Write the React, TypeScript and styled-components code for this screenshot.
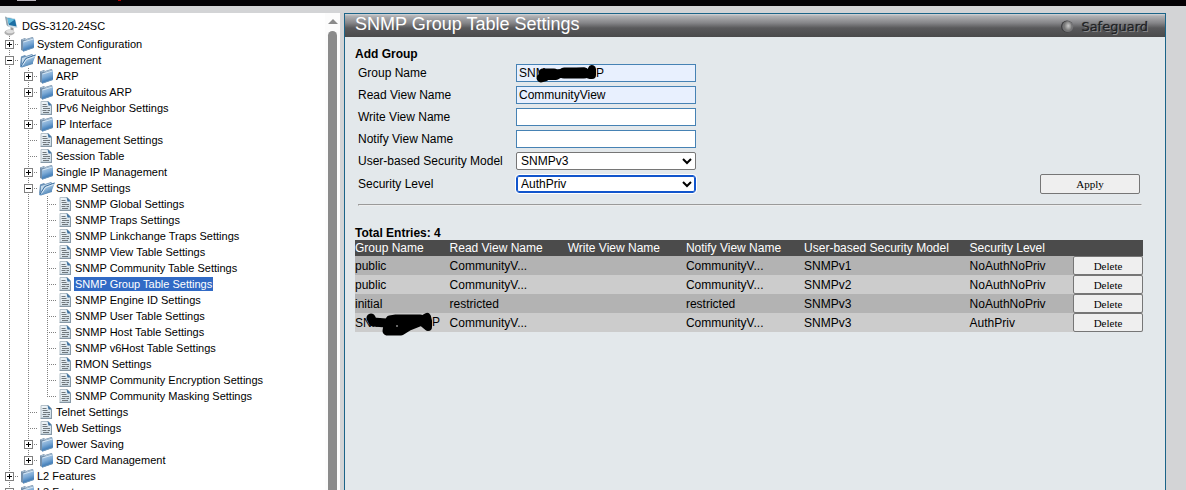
import React from "react";
import styled, { createGlobalStyle, css } from "styled-components";

const Global = createGlobalStyle`
  * { box-sizing: border-box; }
  body { margin: 0; background: #d3d4d6; color: #000; font: 12px "Liberation Sans", Arial, sans-serif; }
`;

const Page = styled.div`
  height: 100vh;
  display: flex;
  flex-direction: column;
  overflow: hidden;
`;

const TopStrip = styled.header`
  flex: none;
  height: 6px;
  margin-bottom: 7px;
  background: #030104;
  display: flex;
`;
const StripLabel = styled.span`
  width: 19px;
  height: 1px;
  margin-left: 17px;
  background: #b9b4bd;
`;
const StripMark = styled.span`
  width: 3px;
  height: 1px;
  margin-left: 82px;
  background: #b00000;
`;

const Body = styled.div`
  flex: 1;
  min-height: 0;
  display: flex;
`;

const Sidebar = styled.nav`
  flex: none;
  width: 340px;
  display: flex;
  background: #fff;
  overflow: hidden;
  margin-right: 4px;
`;
const Tree = styled.div`
  flex: 1;
  font-size: 11px;
  line-height: 16px;
  overflow: hidden;
`;
const RootRow = styled.div`
  display: flex;
  height: 23px;
  padding: 2px 0 0 4px;
  align-items: center;
  gap: 3px;
`;
const TreeRow = styled.div`
  display: flex;
  height: 16px;
  white-space: nowrap;
`;
const vDots = "repeating-linear-gradient(to bottom, #808080 0 1px, transparent 1px 2px)";
const hDots = "repeating-linear-gradient(to right, #808080 0 1px, transparent 1px 2px)";
const Guide = styled.span<{ $half?: boolean; $branch?: boolean }>`
  flex: none;
  width: 19px;
  height: 16px;
  padding: 4px 0 0 5px;
  background-image: ${vDots}${(p) => (p.$branch ? `, ${hDots}` : "")};
  background-repeat: no-repeat;
  background-position: 9px 0, 9px 8px;
  background-size: 1px ${(p) => (p.$half ? "9px" : "16px")}, 10px 1px;
`;
const Toggle = styled.button<{ $open?: boolean }>`
  display: block;
  width: 9px;
  height: 9px;
  padding: 0;
  border: 1px solid #808080;
  background:
    linear-gradient(#000, #000) 1px 3px / 5px 1px no-repeat,
    ${(p) => (p.$open ? "" : "linear-gradient(#000, #000) 3px 1px / 1px 5px no-repeat,")}
    #fff;
`;
const TreeLink = styled.a<{ $selected?: boolean }>`
  color: #000;
  text-decoration: none;
  height: 14px;
  line-height: 14px;
  margin-top: 1px;
  padding: 0 1px;
  ${(p) => p.$selected && css`background: #316ac5; color: #fff;`}
`;
const Icon = styled.svg`
  flex: none;
  display: block;
`;

const ScrollTrack = styled.div`
  width: 15px;
  background: #fcfcfc;
  display: flex;
  flex-direction: column;
  align-items: center;
  padding-top: 6px;
`;
const ScrollArrow = styled.span`
  border: 5px solid transparent;
  border-top: 0;
  border-bottom-color: #8b8b8b;
`;
const ScrollThumb = styled.span`
  flex: 1;
  width: 9px;
  margin-top: 7px;
  border-radius: 5px 5px 0 0;
  background: #8b8b8b;
`;

const Panel = styled.main`
  flex: 1;
  min-width: 0;
  margin-right: 20px;
  border: 1px solid #1b6488;
  border-bottom: 0;
  background: #e3e8eb;
`;
const TitleBar = styled.div`
  display: flex;
  justify-content: space-between;
  height: 23px;
  padding: 0 17px 0 10px;
  background: linear-gradient(#d4d5d8 0, #b0b1b4 2px, #858588 9px, #59595b 14px, #4a4a4b 23px);
`;
const Title = styled.h1`
  margin: 0;
  font-size: 18px;
  line-height: 20px;
  font-weight: 400;
  color: #fff;
`;

const Content = styled.div`
  padding: 10px 22px 0 10px;
`;
const SectionTitle = styled.h2`
  margin: 0;
  font-size: 12px;
  line-height: 14px;
`;
const Form = styled.form`
  padding: 1px 3px 0;
`;
const Field = styled.div<{ $tall?: boolean }>`
  display: flex;
  align-items: center;
  height: ${(p) => (p.$tall ? "24px" : "22px")};
`;
const Label = styled.label`
  width: 158px;
`;
const InputWrap = styled.span`
  position: relative;
  display: flex;
`;
const TextInput = styled.input<{ $filled?: boolean }>`
  width: 180px;
  height: 18px;
  padding: 0 2px;
  border: 1px solid #4682b4;
  background: ${(p) => (p.$filled ? "#e8f0fe" : "#fff")};
  font: inherit;
  color: #000;
`;
const Select = styled.select<{ $focused?: boolean }>`
  width: 180px;
  height: 18px;
  padding: 0;
  border: 1px solid #767676;
  border-radius: 2px;
  background: #fff;
  font: inherit;
  color: #000;
  ${(p) => p.$focused && css`border-color: #1155cc; box-shadow: inset 0 0 0 1px #1155cc; outline: 1px solid #fff; border-radius: 3px;`}
`;
const Button = styled.button<{ $wide?: boolean }>`
  display: block;
  width: ${(p) => (p.$wide ? "100px" : "70px")};
  height: ${(p) => (p.$wide ? "20px" : "19px")};
  padding: 0;
  border: 1px solid #767676;
  border-radius: 2px;
  background: #efefef;
  font: 11px "Liberation Serif", "Times New Roman", serif;
  color: #000;
`;
const ApplyButton = styled(Button)`
  margin-left: auto;
`;
const Rule = styled.hr`
  margin: 8px 1px 0 3px;
  border: 1px inset #eee;
`;
const Total = styled.p`
  margin: 20px 0 0;
  font-weight: 700;
  line-height: 14px;
`;
const Table = styled.table`
  width: 100%;
  border-collapse: collapse;
  table-layout: fixed;
  th, td { padding: 0; text-align: left; font-weight: 400; white-space: nowrap; }
  thead tr { height: 16px; background: #4b4b4b; color: #fff; }
  th { line-height: 16px; }
  tbody tr { height: 19px; background: #cccccc; }
  tbody tr:nth-child(odd) { background: #b3b3b3; }
`;
const NameCell = styled.td`
  position: relative;
`;
const Scribble = styled.svg<{ $x: number; $y: number }>`
  position: absolute;
  left: ${(p) => p.$x}px;
  top: ${(p) => p.$y}px;
`;
const NameTail = styled.span<{ $x: number }>`
  position: absolute;
  left: ${(p) => p.$x}px;
  top: 2px;
  line-height: 14px;
`;

type IconName = "folder" | "open" | "page";

function IconDefs() {
  return (
    <svg width="0" height="0" style={{ position: "absolute" }} aria-hidden="true">
      <defs>
        <linearGradient id="front" x1="0.3" y1="0" x2="0.6" y2="1">
          <stop offset="0" stopColor="#b4cfe8" />
          <stop offset="0.45" stopColor="#7eabd6" />
          <stop offset="0.8" stopColor="#3f7cb8" />
          <stop offset="1" stopColor="#4d86ba" />
        </linearGradient>
        <linearGradient id="flap" x1="0" y1="0" x2="0.6" y2="1">
          <stop offset="0" stopColor="#d6e6f3" />
          <stop offset="0.5" stopColor="#98bddd" />
          <stop offset="1" stopColor="#3c78b0" />
        </linearGradient>
        <linearGradient id="sheet" x1="0" y1="0" x2="1" y2="1">
          <stop offset="0" stopColor="#f4f8fa" />
          <stop offset="1" stopColor="#cbdbe6" />
        </linearGradient>
      </defs>
    </svg>
  );
}

function TreeIcon({ name }: { name: IconName }) {
  if (name === "page")
    return (
      <Icon width="17" height="16" viewBox="0 0 17 16" aria-hidden="true">
        <path d="M3 1.500h7.500l3 3V14H3z" fill="url(#sheet)" stroke="#b3c0c9" />
        <path d="M9.500 1l4.500 4.500h-3.500z" fill="#3a6f9f" />
        <path d="M4.500 4.500h4M4.500 6.500h5M5 8.500h7M4.500 10.500h4M9.500 10.500h2.500M5 12.500h6" stroke="#6f777c" />
        <path d="M2.500 14.500h11.500M13.500 6v8" stroke="#8698a6" />
      </Icon>
    );
  return (
    <Icon width="17" height="16" viewBox="0 0 17 16" aria-hidden="true">
      {name === "folder" ? (
        <>
          <path d="M2 3.500L6 2l1 1 6.500-2 1 1v2L5 7v8.500L2 14z" fill="#7590ab" />
          <path d="M3 4l3-1 1 1 6.500-2" stroke="#a9bfd2" fill="none" />
          <path d="M4 5.500L15 2.200v9.600L4.500 15.500 4 15z" fill="url(#front)" />
          <path d="M4.500 6L15 2.800" stroke="#d3e4f2" />
          <path d="M4.500 15L15 11.500" stroke="#6d96bb" />
        </>
      ) : (
        <>
          <path d="M2 4.500L6 3l1 1 6-2 1 1v9L3 15.500l-2-2z" fill="#6b92b8" />
          <path d="M3 6l10-3v7L3 13z" fill="#c3d9eb" />
          <path d="M6.500 6L17 2.500 13.500 11.500 2 15.500l-1-1z" fill="url(#flap)" />
          <path d="M2 14.500L6.800 6.500 16.500 3" stroke="#3f6f9d" fill="none" />
          <path d="M3.500 13.500L7.500 7.500 15.500 4.500" stroke="#e2eef8" fill="none" />
        </>
      )}
    </Icon>
  );
}

function RootIcon() {
  return (
    <Icon width="14" height="21" viewBox="0 0 14 21" aria-hidden="true">
      <path d="M1 1.500l10 2 2.500 9.500-9-1z" fill="#cfdde5" />
      <path d="M3.500 3l7.500 1.500 1.500 7-7.500-1.500z" fill="#1c6fa4" />
      <path d="M3.500 3l7.500 1.500-6.500 4.500z" fill="#62bbdc" />
      <path d="M1 1.500l2 1L4.500 12 2.500 10z" fill="#93a5b0" />
      <path d="M6.500 12l3 1v3h-3z" fill="#9a9a9a" />
      <ellipse cx="5.500" cy="17.500" rx="5" ry="3" fill="#b0b0b0" />
      <ellipse cx="6" cy="16.500" rx="4" ry="1.800" fill="#dedede" />
    </Icon>
  );
}

const Brand = styled.div`
  display: flex;
  align-items: center;
  gap: 7px;
  height: 23px;
  padding-top: 2px;
  font: 13px "DejaVu Sans", sans-serif;
  color: #232325;
  text-shadow: 1px 1px 0 #8b8b8d, 0 0 1px #232325;
`;

function Safeguard() {
  return (
    <Brand>
      <Icon width="13" height="13" viewBox="0 0 13 13" aria-hidden="true">
        <defs>
          <radialGradient id="lamp" cx="0.6" cy="0.45">
            <stop offset="0" stopColor="#c9c9c9" />
            <stop offset="1" stopColor="#777" />
          </radialGradient>
        </defs>
        <circle cx="6" cy="6.500" r="6" fill="#3e3e40" />
        <circle cx="6.800" cy="6.500" r="5.500" fill="#747476" />
        <ellipse cx="6.500" cy="6.300" rx="4" ry="4.800" fill="url(#lamp)" />
      </Icon>
      Safeguard
    </Brand>
  );
}

interface Node {
  label: string;
  depth: number;
  kind: IconName;
  last?: boolean;
  selected?: boolean;
}
const f = (depth: number, label: string, kind: IconName = "folder", extra = {}): Node => ({ label, depth, kind, ...extra });
const nodes: Node[] = [
  f(0, "System Configuration"),
  f(0, "Management", "open"),
  f(1, "ARP"),
  f(1, "Gratuitous ARP"),
  f(1, "IPv6 Neighbor Settings", "page"),
  f(1, "IP Interface"),
  f(1, "Management Settings", "page"),
  f(1, "Session Table", "page"),
  f(1, "Single IP Management"),
  f(1, "SNMP Settings", "open"),
  f(2, "SNMP Global Settings", "page"),
  f(2, "SNMP Traps Settings", "page"),
  f(2, "SNMP Linkchange Traps Settings", "page"),
  f(2, "SNMP View Table Settings", "page"),
  f(2, "SNMP Community Table Settings", "page"),
  f(2, "SNMP Group Table Settings", "page", { selected: true }),
  f(2, "SNMP Engine ID Settings", "page"),
  f(2, "SNMP User Table Settings", "page"),
  f(2, "SNMP Host Table Settings", "page"),
  f(2, "SNMP v6Host Table Settings", "page"),
  f(2, "RMON Settings", "page"),
  f(2, "SNMP Community Encryption Settings", "page"),
  f(2, "SNMP Community Masking Settings", "page", { last: true }),
  f(1, "Telnet Settings", "page"),
  f(1, "Web Settings", "page"),
  f(1, "Power Saving"),
  f(1, "SD Card Management", "folder", { last: true }),
  f(0, "L2 Features"),
  f(0, "L3 Features"),
];

const rows = [
  ["public", "CommunityV...", "", "CommunityV...", "SNMPv1", "NoAuthNoPriv"],
  ["public", "CommunityV...", "", "CommunityV...", "SNMPv2", "NoAuthNoPriv"],
  ["initial", "restricted", "", "restricted", "SNMPv3", "NoAuthNoPriv"],
  ["SNM", "CommunityV...", "", "CommunityV...", "SNMPv3", "AuthPriv"],
];
const columns = ["Group Name", "Read View Name", "Write View Name", "Notify View Name", "User-based Security Model", "Security Level"];
const widths = ["12%", "15%", "15%", "15%", "21%", "auto", "70px"];

export default function App() {
  return (
    <Page>
      <Global />
      <IconDefs />
      <TopStrip><StripLabel /><StripMark /></TopStrip>
      <Body>
        <Sidebar>
          <Tree>
            <RootRow><RootIcon /><TreeLink href="#">DGS-3120-24SC</TreeLink></RootRow>
            {nodes.map((n) => (
              <TreeRow key={n.label}>
                {Array.from({ length: n.depth }, (_, i) => <Guide key={i} />)}
                <Guide $half={n.last} $branch>
                  {n.kind !== "page" && <Toggle type="button" $open={n.kind === "open"} aria-label={n.label} />}
                </Guide>
                <TreeIcon name={n.kind} />
                <TreeLink href="#" $selected={n.selected}>{n.label}</TreeLink>
              </TreeRow>
            ))}
          </Tree>
          <ScrollTrack><ScrollArrow /><ScrollThumb /></ScrollTrack>
        </Sidebar>
        <Panel>
          <TitleBar><Title>SNMP Group Table Settings</Title><Safeguard /></TitleBar>
          <Content>
            <SectionTitle>Add Group</SectionTitle>
            <Form onSubmit={(e) => e.preventDefault()}>
              <Field>
                <Label htmlFor="group">Group Name</Label>
                <InputWrap>
                  <TextInput id="group" $filled defaultValue="SNM" />
                  <NameTail $x={80}>P</NameTail>
                  <Scribble $x={18} $y={0} width="64" height="20" viewBox="0 0 64 20" aria-hidden="true">
                    <g stroke="#000" strokeLinecap="round" strokeLinejoin="round" fill="none">
                      <path d="M7 14l4-1" strokeWidth="9" />
                      <path d="M9 9l11 0 0 1 30-2" strokeWidth="9" />
                      <path d="M12 11l10 0" strokeWidth="10" />
                      <path d="M30 9l20 0" strokeWidth="11" />
                      <path d="M50 9l6 2 2-6 0 6" strokeWidth="8" />
                    </g>
                  </Scribble>
                </InputWrap>
              </Field>
              <Field>
                <Label htmlFor="read">Read View Name</Label>
                <TextInput id="read" $filled defaultValue="CommunityView" />
              </Field>
              <Field>
                <Label htmlFor="write">Write View Name</Label>
                <TextInput id="write" />
              </Field>
              <Field>
                <Label htmlFor="notify">Notify View Name</Label>
                <TextInput id="notify" />
              </Field>
              <Field>
                <Label htmlFor="model">User-based Security Model</Label>
                <Select id="model"><option>SNMPv3</option></Select>
              </Field>
              <Field $tall>
                <Label htmlFor="level">Security Level</Label>
                <Select id="level" $focused><option>AuthPriv</option></Select>
                <ApplyButton $wide>Apply</ApplyButton>
              </Field>
            </Form>
            <Rule />
            <Total>Total Entries: 4</Total>
            <Table>
              <colgroup>
                {widths.map((w, i) => <col key={i} style={{ width: w }} />)}
              </colgroup>
              <thead>
                <tr>{columns.map((c) => <th key={c}>{c}</th>)}<th aria-label="Actions" /></tr>
              </thead>
              <tbody>
                {rows.map((r, i) => (
                  <tr key={i}>
                    {r.map((c, j) =>
                      i === 3 && j === 0 ? (
                        <NameCell key={j}>
                          {c}<NameTail $x={77}>P</NameTail>
                          <Scribble $x={11} $y={-1} width="70" height="26" viewBox="0 0 70 26" aria-hidden="true">
                            <g stroke="#000" strokeLinecap="round" strokeLinejoin="round" fill="none">
                              <path d="M5 6l2 4 13 1" strokeWidth="9" />
                              <path d="M24 8l6-1 24 0" strokeWidth="9" />
                              <path d="M22 13l-1 6 14 0 8-5 10-4" strokeWidth="9" />
                              <path d="M26 15h12" strokeWidth="9" />
                              <path d="M54 9l7-4 1 4 0 6-6-5" strokeWidth="8" />
                            </g>
                            <path d="M30 14h2" stroke="#ccc" />
                          </Scribble>
                        </NameCell>
                      ) : (
                        <td key={j}>{c}</td>
                      ),
                    )}
                    <td><Button type="button">Delete</Button></td>
                  </tr>
                ))}
              </tbody>
            </Table>
          </Content>
        </Panel>
      </Body>
    </Page>
  );
}
